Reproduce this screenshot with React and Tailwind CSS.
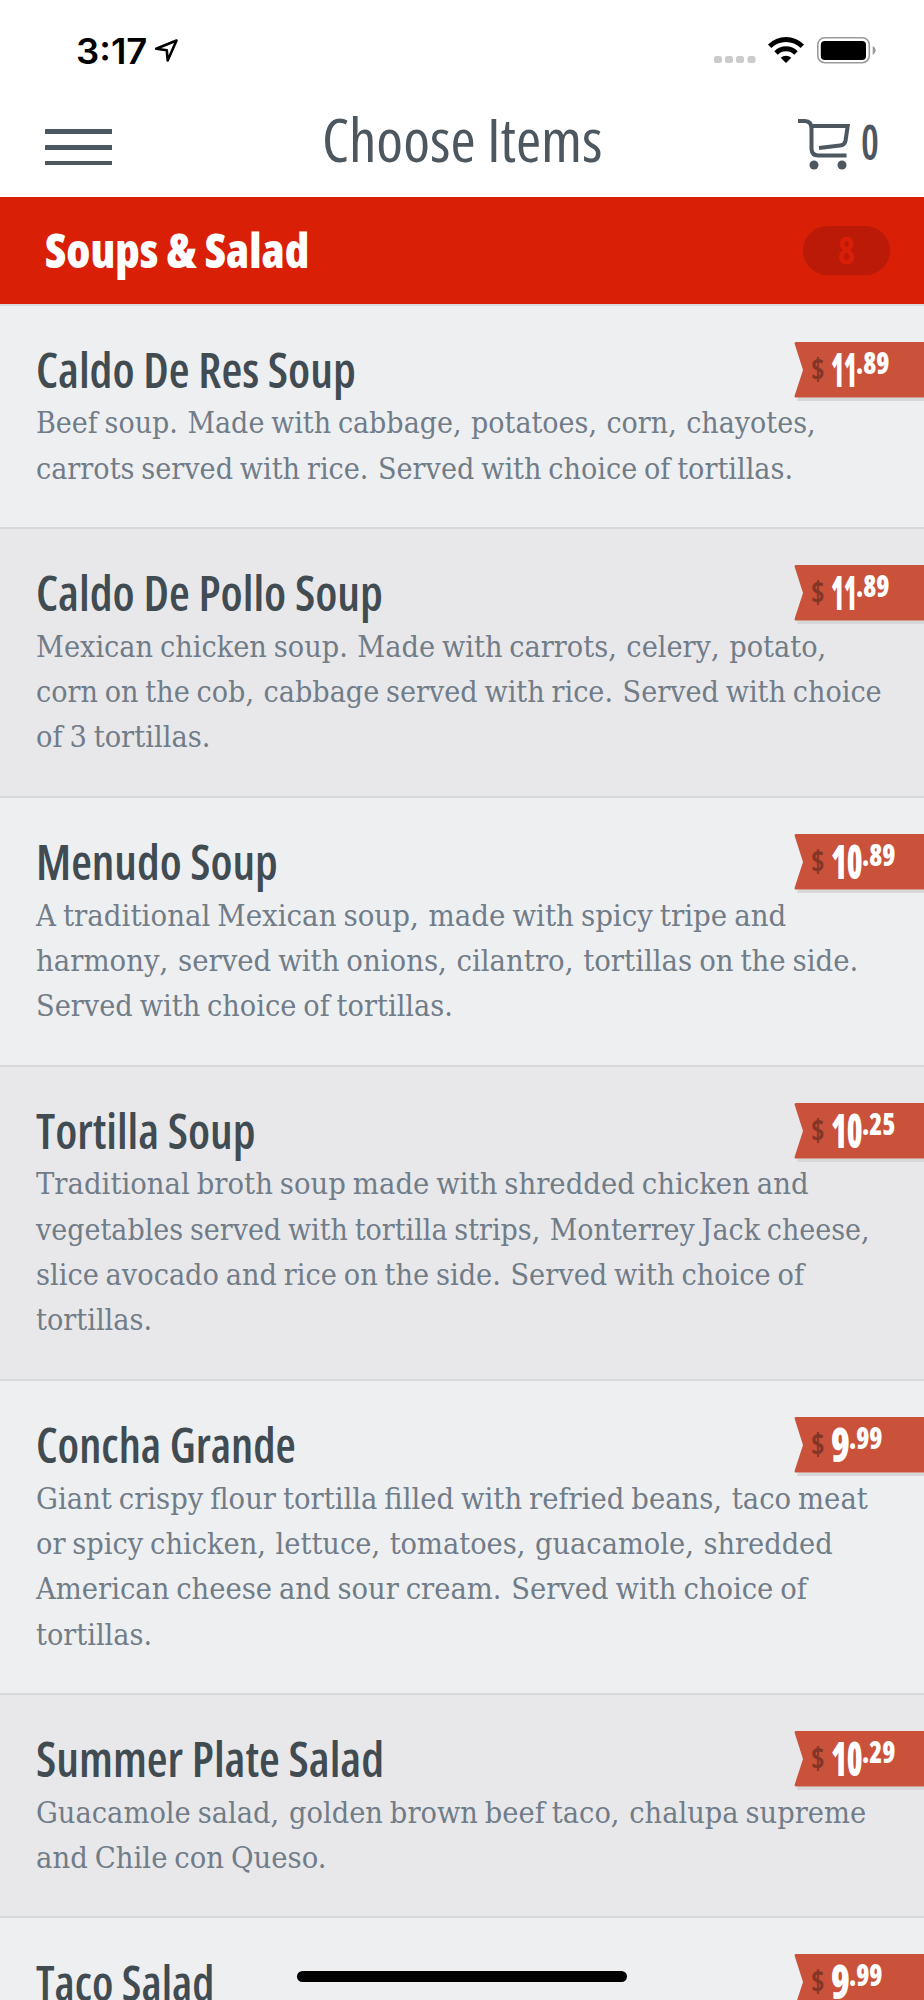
import { useLayoutEffect, useRef } from "react";

const items = [
    {
        name: "Caldo De Res Soup", nameWidth: 320, dollars: "11", cents: "89",
        lines: [["Beef soup. Made with cabbage, potatoes, corn, chayotes,", 780], ["carrots served with rice. Served with choice of tortillas.", 757]],
    },
    {
        name: "Caldo De Pollo Soup", nameWidth: 347, dollars: "11", cents: "89",
        lines: [["Mexican chicken soup. Made with carrots, celery, potato,", 790], ["corn on the cob, cabbage served with rice. Served with choice", 846], ["of 3 tortillas.", 174]],
    },
    {
        name: "Menudo Soup", nameWidth: 242, dollars: "10", cents: "89",
        lines: [["A traditional Mexican soup, made with spicy tripe and", 750], ["harmony, served with onions, cilantro, tortillas on the side.", 822], ["Served with choice of tortillas.", 417]],
    },
    {
        name: "Tortilla Soup", nameWidth: 219, dollars: "10", cents: "25",
        lines: [["Traditional broth soup made with shredded chicken and", 773], ["vegetables served with tortilla strips, Monterrey Jack cheese,", 834], ["slice avocado and rice on the side. Served with choice of", 768], ["tortillas.", 116]],
    },
    {
        name: "Concha Grande", nameWidth: 260, dollars: "9", cents: "99",
        lines: [["Giant crispy flour tortilla filled with refried beans, taco meat", 832], ["or spicy chicken, lettuce, tomatoes, guacamole, shredded", 797], ["American cheese and sour cream. Served with choice of", 771], ["tortillas.", 116]],
    },
    {
        name: "Summer Plate Salad", nameWidth: 348, dollars: "10", cents: "29",
        lines: [["Guacamole salad, golden brown beef taco, chalupa supreme", 830], ["and Chile con Queso.", 291]],
    },
    {
        name: "Taco Salad", nameWidth: 178, dollars: "9", cents: "99",
        lines: [],
    },
];

// space taken by the dollar digits on the tag
const dollarWidths = { "9": 18, "10": 31, "11": 25 };

// scales a single line of text horizontally to the given width
const FitText = ({ width, className = "", children }) => {

    let ref = useRef(null);

    useLayoutEffect(() => {
        let el = ref.current;
        el.style.transform = `scaleX(${width / el.offsetWidth})`;
    }, [width]);

    return <span ref={ref} className={`inline-block origin-left whitespace-nowrap ${className}`}>{children}</span>
}

const Line = ({ text, width }) => (
    <div className="h-[45.35px]">
        <FitText width={width} className="[word-spacing:-2px]">
            {
                text.split(/([,.] )/).map((part, i) => (
                    i % 2 ? <span key={i} className="tracking-[1.5px]">{part}</span> : part
                ))
            }
        </FitText>
    </div>
)

const PriceTag = ({ dollars, cents }) => (
    <div className="relative w-[130px] h-[59px] shrink-0">
        <svg className="absolute inset-0" width="130" height="59" viewBox="0 0 130 59">
            <path d="M4 55.5H130V59H3Z" fill="#d6d7d8" />
            <path d="M2.2 0H130V55.5H2.2Q0 55.5 .7 53.5L9 28L.7 2Q0 0 2.2 0Z" fill="#ca523b" />
        </svg>
        <div className="relative flex h-[56px] font-['Open_Sans'] [font-stretch:75%] font-bold leading-none text-white">
            <span className="ml-[17px] pt-[12px] w-[20px] shrink-0 text-[30px] text-[#833526]"><FitText width={13.5}>$</FitText></span>
            <span className="pt-[3px] shrink-0 text-[48px] font-extrabold" style={{ width: dollarWidths[dollars] }}><FitText width={dollarWidths[dollars] + 1}>{dollars}</FitText></span>
            <span className="pt-[6px] text-[30px] font-extrabold"><FitText width={33.5}>.{cents}</FitText></span>
        </div>
    </div>
)

const MenuItem = ({ item: { name, nameWidth, dollars, cents, lines }, dark }) => (
    <div className={`border-b-2 border-[#d7d8da] pl-9 pt-[36px] pb-[34px] ${dark ? "bg-[#e8e8ea]" : "bg-[#eeeff1]"}`}>
        <div className="flex h-[60.8px] justify-between">
            <h2 className="-mt-[1.5px] font-['Open_Sans'] [font-stretch:75%] font-semibold text-[48px] leading-[60px] text-[#414b52]"><FitText width={nameWidth}>{name}</FitText></h2>
            <PriceTag dollars={dollars} cents={cents} />
        </div>
        <div className="-mt-[1px] mb-[1px] font-['DejaVu_Serif'] text-[30px] leading-[44px] text-[#707c88]">
            {lines.map(([text, width], i) => <Line key={i} text={text} width={width} />)}
        </div>
    </div>
)

const StatusBar = () => (
    <div className="flex h-[100px] justify-between pl-[76px] pr-[48px] pt-[30px]">
        <div className="flex">
            <span className="w-[77px] font-['Inter'] font-semibold text-[35px] leading-[42px] text-black"><FitText width={71}>3:17</FitText></span>
            <svg className="mt-[7px]" width="28" height="28" viewBox="0 0 28 28" fill="none" stroke="#000" strokeWidth="2.600" strokeLinejoin="round">
                <path d="M23.500 3.500L3.200 11.700L13.800 13.300L14.700 23.500Z" />
            </svg>
        </div>
        <svg width="170" height="44" viewBox="706 30 170 44">
            <g fill="#cbcbcb">
                <rect x="714" y="56" width="8" height="7" rx="2.5" /><rect x="725" y="56" width="8" height="7" rx="2.5" />
                <rect x="736" y="56" width="8" height="7" rx="2.5" /><rect x="747.500" y="56" width="8" height="7" rx="2.5" />
            </g>
            <path d="M768 44.500A25.500 25.500 0 0 1 804 44.500L800.700 48A20.800 20.800 0 0 0 771.300 48ZM774.300 51.200A16.400 16.400 0 0 1 797.700 51.200L794.300 54.700A12 12 0 0 0 777.700 54.700ZM780.700 57.800A7.600 7.600 0 0 1 791.300 57.800L786 63Z" fill="#000" />
            <rect x="817.800" y="37.700" width="51.500" height="25" rx="7" fill="none" stroke="#9b9b9b" strokeWidth="1.600" />
            <rect x="820.800" y="41" width="45.200" height="19" rx="4" fill="#000" />
            <path d="M872.700 46Q875.700 47.500 875.700 50.200T872.700 55Z" fill="#9b9b9b" />
        </svg>
    </div>
)

const App = () => {
    return (
        <div className="relative w-[924px] h-[2000px] overflow-hidden bg-white">
            <StatusBar />
            <div className="flex h-[96.5px] items-start pl-[45px] pr-[47px]">
                <div className="mt-[29.3px] w-[67px] flex flex-col gap-[11px]">
                    <div className="h-[4.7px] bg-[#4d575f]"></div>
                    <div className="h-[4.7px] bg-[#4d575f]"></div>
                    <div className="h-[4.7px] bg-[#4d575f]"></div>
                </div>
                <h1 className="ml-[209.5px] mt-[3px] w-[281px] font-['Open_Sans'] [font-stretch:75%] font-normal text-[60px] leading-[72px] text-[#4d575f]"><FitText width={281}>Choose Items</FitText></h1>
                <div className="flex ml-auto mt-[16px] w-[80px]">
                    <svg width="56" height="58" viewBox="796 116 56 58" className="shrink-0" fill="none" stroke="#4d575f" strokeWidth="4">
                        <path d="M797 121H804Q810.500 121 810.500 129V149Q811 155.500 817 155.500H845.500M811 126H846.700L844.500 141Q843.500 145 839 145.500L818 148" />
                        <circle cx="813" cy="165" r="4.500" fill="#4d575f" stroke="none" />
                        <circle cx="841" cy="165" r="4.500" fill="#4d575f" stroke="none" />
                    </svg>
                    <span className="ml-[8px] -mt-[1px] font-['Open_Sans'] [font-stretch:75%] font-semibold text-[49px] leading-[52px] text-[#4d575f]"><FitText width={18}>0</FitText></span>
                </div>
            </div>
            <div className="flex h-[107px] items-center justify-between bg-[#d92007] pl-[45px] pr-[34px]">
                <h2 className="-mt-[1px] font-['Open_Sans'] [font-stretch:75%] font-extrabold text-[47px] leading-[60px] text-white"><FitText width={264}>Soups & Salad</FitText></h2>
                <div className="flex h-[49px] w-[87px] items-center justify-center rounded-full bg-[#ba1a07] font-['Open_Sans'] [font-stretch:75%] font-bold text-[37px] text-[#d92007]">8</div>
            </div>
            <div className="h-[2px] bg-[#d9dcde]"></div>
            {items.map((item, i) => <MenuItem key={i} item={item} dark={i % 2 == 1} />)}
            <div className="absolute left-[297px] top-[1971px] h-[11px] w-[330px] rounded-full bg-black"></div>
        </div>
    )
}

export default App;
